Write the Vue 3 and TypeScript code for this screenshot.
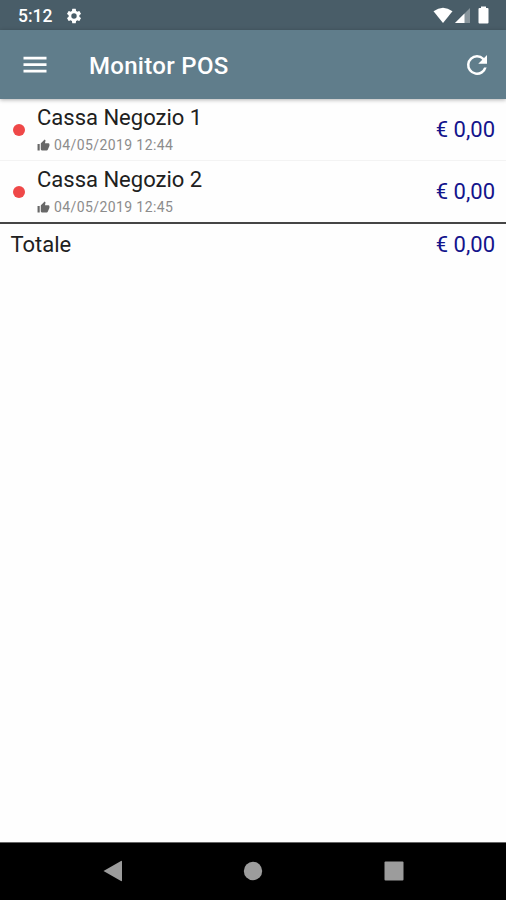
<script setup lang="ts">
interface Register {
  name: string
  updated: string
  amount: string
}

const registers: Register[] = [
  { name: 'Cassa Negozio 1', updated: '04/05/2019 12:44', amount: '€ 0,00' },
  { name: 'Cassa Negozio 2', updated: '04/05/2019 12:45', amount: '€ 0,00' },
]
const total = '€ 0,00'
</script>

<template>
  <div class="screen">
    <div class="status">
      <span class="clock">5:12</span>
      <svg class="gear" viewBox="0 0 24 24"><path d="M19.14 12.94c.04-.3.06-.61.06-.94s-.02-.64-.07-.94l2.03-1.58a.5.5 0 0 0 .12-.61l-1.92-3.32a.5.5 0 0 0-.59-.22l-2.39.96a7 7 0 0 0-1.62-.94l-.36-2.54A.48.48 0 0 0 13.920 2.400h-3.840a.48.48 0 0 0-.47.41l-.36 2.54c-.59.24-1.130.57-1.620.94l-2.390-.96a.48.48 0 0 0-.59.22L2.740 8.870a.48.48 0 0 0 .12.61l2.030 1.580a6 6 0 0 0 0 1.880l-2.030 1.580a.5.5 0 0 0-.12.61l1.920 3.320c.12.22.37.29.59.22l2.390-.96c.5.38 1.030.7 1.620.94l.36 2.540c.05.24.24.41.47.41h3.840c.24 0 .44-.17.47-.41l.36-2.540a7 7 0 0 0 1.620-.94l2.390.96c.22.08.47 0 .59-.22l1.920-3.320a.48.48 0 0 0-.12-.61zM12 15.600a3.600 3.600 0 1 1 0-7.200 3.600 3.600 0 0 1 0 7.200z" /></svg>
      <svg class="signals" viewBox="0 0 60 20">
        <path d="M0.500 5.200Q10 -1.800 19.500 5.200L10 17z" />
        <path opacity=".35" d="M37 2V17H22z" />
        <path d="M31.500 7.500V17H22z" />
        <path d="M48 2V.5h5V2h1.500q1 0 1 1V16.500q0 1-1 1h-8q-1 0-1-1V3q0-1 1-1z" />
      </svg>
    </div>
    <header class="bar">
      <svg class="menu" viewBox="0 0 24 18"><path d="M.5.8h23v2.700H.5zM.5 7.300h23V10H.5zM.5 13.800h23v2.700H.5z" /></svg>
      <h1>Monitor POS</h1>
      <svg class="refresh" viewBox="0 0 24 24"><path d="M17.650 6.350A7.958 7.958 0 0 0 12 4a8 8 0 1 0 7.730 10h-2.080A6 6 0 1 1 12 6c1.660 0 3.140.69 4.220 1.780L13 11h7V4z" /></svg>
    </header>
    <main>
      <div v-for="item in registers" :key="item.name" class="row">
        <span class="dot"></span>
        <div class="info">
          <div class="name">{{ item.name }}</div>
          <div class="meta">
            <svg class="thumb" viewBox="0 0 24 24"><path d="M1 21h4V9H1zm22-11a2 2 0 0 0-2-2h-6.310l.95-4.570.03-.32c0-.41-.17-.79-.44-1.060L14.170 1 7.590 7.590C7.220 7.950 7 8.450 7 9v10a2 2 0 0 0 2 2h9c.83 0 1.540-.5 1.840-1.220l3.020-7.050c.09-.23.14-.47.14-.73z" /></svg>
            <span class="date">{{ item.updated }}</span>
          </div>
        </div>
        <span class="amount">{{ item.amount }}</span>
      </div>
      <div class="total">
        <span class="total-label">Totale</span>
        <span class="amount">{{ total }}</span>
      </div>
    </main>
    <nav class="nav">
      <svg viewBox="0 0 20 22"><path d="M0.500 11L18 1Q19 .5 19 1.500V20.500Q19 21.500 18 21z" /></svg>
      <svg viewBox="0 0 20 22"><circle cx="10" cy="11" r="9.200" /></svg>
      <svg viewBox="0 0 20 22"><rect x=".5" y="1.500" width="19" height="19" rx="1" /></svg>
    </nav>
  </div>
</template>

<style>
body {
  margin: 0;
}
</style>

<style scoped>
.screen {
  width: 506px;
  height: 900px;
  display: flex;
  flex-direction: column;
  overflow: hidden;
  background: #fefefe;
  font-family: Roboto, "Liberation Sans", sans-serif;
  color: #202020;
}
svg {
  display: block;
  fill: #fff;
  flex: none;
}
.status {
  height: 30px;
  flex: none;
  box-sizing: border-box;
  display: flex;
  align-items: center;
  padding: 2px 13px 0 18px;
  background: #495d68;
  color: #fff;
}
.clock {
  width: 47px;
  font-size: 17.500px;
  font-weight: 500;
  line-height: 28px;
}
.gear {
  width: 18px;
  height: 18px;
}
.signals {
  width: 60px;
  height: 20px;
  margin-left: auto;
}
.bar {
  height: 69px;
  flex: none;
  box-sizing: border-box;
  display: flex;
  align-items: center;
  padding: 0 14px 0 23px;
  background: #607d8b;
  box-shadow: 0 1px 4px rgba(0, 0, 0, 0.3);
}
.menu {
  width: 24px;
  height: 18px;
}
h1 {
  margin: 2px 0 0 42px;
  font-size: 24px;
  font-weight: 500;
  line-height: 30px;
  letter-spacing: 0.3px;
  color: #fff;
}
.refresh {
  width: 30px;
  height: 30px;
  margin-left: auto;
}
main {
  flex: 1;
}
.row {
  height: 62px;
  box-sizing: border-box;
  display: flex;
  align-items: center;
  padding: 1px 11px 0 13px;
  border-bottom: 1px solid #f3f3f3;
}
.row:nth-child(2) {
  height: 61px;
  border-bottom: 0;
}
.dot {
  width: 12px;
  height: 12px;
  border-radius: 50%;
  background: #ef4848;
}
.info {
  flex: 1;
  padding-left: 12px;
}
.name {
  font-size: 22px;
  line-height: 30px;
}
.meta {
  display: flex;
  align-items: center;
  height: 24px;
}
.thumb {
  width: 13px;
  height: 13px;
  fill: #686868;
}
.date {
  margin-left: 4px;
  font-size: 14px;
  letter-spacing: 0.4px;
  color: #8c8c8c;
}
.amount {
  font-size: 22px;
  line-height: 30px;
  color: #14148c;
}
.total {
  display: flex;
  justify-content: space-between;
  height: 44px;
  padding: 6px 11px 0 10.500px;
  border-top: 2px solid #454545;
}
.total-label {
  font-size: 22px;
  line-height: 30px;
}
.nav {
  height: 58px;
  flex: none;
  box-sizing: border-box;
  display: flex;
  align-items: center;
  justify-content: space-between;
  padding: 0 102.500px 2px;
  background: #000;
  border-top: 1px solid #666;
}
.nav svg {
  width: 20px;
  height: 22px;
  fill: #9c9c9c;
}
</style>
